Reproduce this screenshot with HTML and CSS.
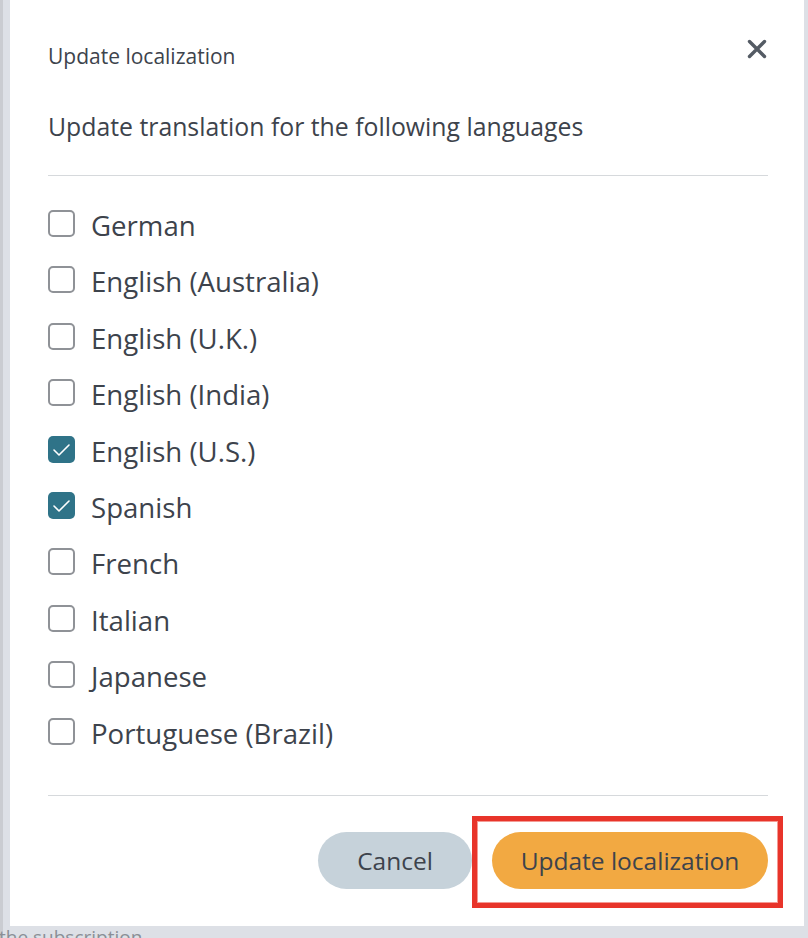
FILE: index.html
```html
<!DOCTYPE html>
<html lang="en">
<head>
<meta charset="utf-8">
<title>Update localization</title>
<link rel="stylesheet" href="styles.css">
</head>
<body>
<div class="backdrop">
  <div class="modal">
    <header class="modal-header">
      <h2 class="title">Update localization</h2>
      <button class="close" aria-label="Close">
        <svg viewBox="0 0 20 20" width="20" height="20"><path d="M2.5 2.5 L17.5 17.5 M17.5 2.5 L2.5 17.5" stroke="#545b64" stroke-width="3.4" stroke-linecap="round" fill="none"/></svg>
      </button>
    </header>
    <p class="subtitle">Update translation for the following languages</p>
    <hr class="divider divider-top">
    <ul class="lang-list">
      <li class="lang"><span class="box"></span><span class="label">German</span></li>
      <li class="lang"><span class="box"></span><span class="label">English (Australia)</span></li>
      <li class="lang"><span class="box"></span><span class="label">English (U.K.)</span></li>
      <li class="lang"><span class="box"></span><span class="label">English (India)</span></li>
      <li class="lang"><span class="box checked"><svg viewBox="0 0 27 27" width="27" height="27"><path d="M6 14 L11 19 L21 9" stroke="#fff" stroke-width="1.6" fill="none" stroke-linecap="round" stroke-linejoin="round"/></svg></span><span class="label">English (U.S.)</span></li>
      <li class="lang"><span class="box checked"><svg viewBox="0 0 27 27" width="27" height="27"><path d="M6 14 L11 19 L21 9" stroke="#fff" stroke-width="1.6" fill="none" stroke-linecap="round" stroke-linejoin="round"/></svg></span><span class="label">Spanish</span></li>
      <li class="lang"><span class="box"></span><span class="label">French</span></li>
      <li class="lang"><span class="box"></span><span class="label">Italian</span></li>
      <li class="lang"><span class="box"></span><span class="label">Japanese</span></li>
      <li class="lang"><span class="box"></span><span class="label">Portuguese (Brazil)</span></li>
    </ul>
    <hr class="divider divider-bottom">
    <footer class="actions">
      <button class="btn btn-cancel">Cancel</button>
      <div class="highlight">
        <button class="btn btn-primary">Update localization</button>
      </div>
    </footer>
  </div>
  <p class="under-text">the subscription</p>
</div>
</body>
</html>
```

FILE: styles.css
```css
* { box-sizing: border-box; }

html, body {
  margin: 0;
  padding: 0;
  height: 100%;
  overflow: hidden;
}

body {
  background: linear-gradient(to right, #caccd1 0, #caccd1 3px, #dde0e6 3px);
  font-family: "Open Sans", "Liberation Sans", sans-serif;
  color: #3d434c;
}

.backdrop {
  padding: 0 4px 0 10px;
}

.modal {
  position: relative;
  z-index: 1;
  background: #fff;
  height: 926px;
  padding: 42px 36px 0 38px;
  display: flex;
  flex-direction: column;
}

.modal-header {
  display: flex;
  justify-content: space-between;
  align-items: flex-start;
}

.title {
  margin: 0;
  font-size: 21px;
  line-height: 28px;
  font-weight: 400;
  color: #3d434c;
}

.close {
  margin: -3px 1px 0 0;
  padding: 0;
  width: 20px;
  height: 20px;
  border: 0;
  background: none;
  display: block;
}
.close svg { display: block; }

.subtitle {
  margin: 40px 0 0;
  font-size: 24.8px;
  line-height: 32px;
}

.divider {
  margin: 0;
  border: 0;
  border-top: 1px solid #d6d9dc;
  height: 0;
}
.divider-top { margin-top: 33px; }
.divider-bottom { margin-top: 35.7px; }

.lang-list {
  list-style: none;
  margin: 19.3px 0 0;
  padding: 0;
}

.lang {
  height: 56.4px;
  display: flex;
  align-items: center;
  gap: 16px;
}

.box {
  width: 27px;
  height: 27px;
  border: 2px solid #8f9297;
  border-radius: 5px;
  flex: none;
  display: flex;
}
.box.checked {
  border: 0;
  background: #2f7388;
}
.box svg { display: block; }

.label {
  font-size: 27.6px;
  line-height: 36px;
  color: #3d434c;
  margin-top: 3px;
}

.actions {
  display: flex;
  justify-content: flex-end;
  align-items: flex-start;
  padding-top: 20px;
  margin-right: -15px;
}

.btn {
  height: 57px;
  border: 0;
  border-radius: 29px;
  font-family: "Open Sans", "Liberation Sans", sans-serif;
  font-size: 24.5px;
  color: #3d434c;
  padding: 0;
  display: flex;
  align-items: center;
  justify-content: center;
}

.btn-cancel {
  margin-top: 16px;
  width: 154px;
  background: #c6d2da;
}

.btn-primary {
  width: 276px;
  background: #f2a942;
}

.highlight {
  border: 5px solid #e8342a;
  box-shadow: inset 0 0 0 1px #f49a94;
  padding: 11px 10px 14px 15px;
}

.under-text {
  margin: -2px 0 0 -11px;
  font-size: 19px;
  line-height: 26px;
  color: #8a8f96;
}
```
